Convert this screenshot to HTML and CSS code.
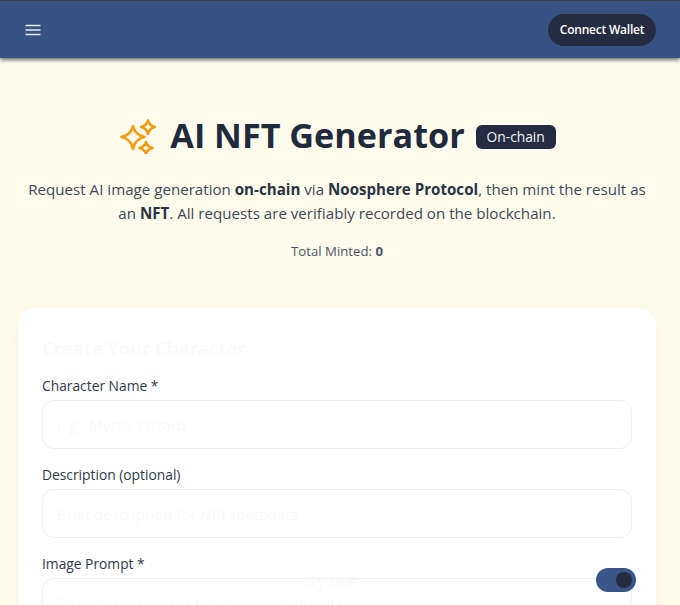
FILE: index.html
```html
<!DOCTYPE html>
<html lang="en">
<head>
<meta charset="utf-8">
<title>AI NFT Generator</title>
<link rel="stylesheet" href="styles.css">
</head>
<body>
<header class="topbar">
  <button class="menu" aria-label="Menu">
    <svg width="16" height="12" viewBox="0 0 16 12" fill="none" stroke="#e6ecf7" stroke-width="1.4"><path d="M0.5 1.5H15.5M0.5 6H15.5M0.5 10.5H15.5"/></svg>
  </button>
  <button class="connect">Connect Wallet</button>
</header>
<main class="page">
  <section class="hero">
    <h1 class="title">
      <svg class="sparkles" width="38" height="38" viewBox="0 0 38 38" fill="none" stroke="#f39c12" stroke-width="2.6" stroke-linejoin="round"><path d="M13 10Q15 19 24.500 21Q15 23 13 33Q11 23 1.500 21Q11 19 13 10Z"/><path d="M28 4.500Q29.300 9.700 35 11Q29.300 12.300 28 18Q26.700 12.300 21 11Q26.700 9.700 28 4.500Z"/><path d="M26 26Q27.200 30.800 32.500 32Q27.200 33.200 26 38Q24.800 33.200 19.500 32Q24.800 30.800 26 26Z"/></svg>
      <span class="title-text">AI NFT Generator</span>
      <span class="badge">On-chain</span>
    </h1>
    <p class="lead">Request AI image generation <b>on-chain</b> via <b>Noosphere Protocol</b>, then mint the result as an <b>NFT</b>. All requests are verifiably recorded on the blockchain.</p>
    <p class="total">Total Minted: <b>0</b></p>
  </section>
  <section class="card">
    <h2 class="card-title">Create Your Character</h2>
    <div class="field">
      <label class="label">Character Name *</label>
      <div class="input">e.g., Mystic Wizard</div>
    </div>
    <div class="field">
      <label class="label">Description (optional)</label>
      <div class="input">Brief description for NFT metadata</div>
    </div>
    <div class="field">
      <label class="label">Image Prompt *</label>
      <div class="input">Describe the image you want to generate</div>
    </div>
  </section>
</main>
<div class="ghost">Sky Blue</div>
<div class="toggle"><span class="knob"></span></div>
</body>
</html>
```
FILE: styles.css
```css
* { box-sizing: border-box; }
html, body { height: 100%; }
body {
  margin: 0;
  height: 605px;
  overflow: hidden;
  background: #fffcee;
  font-family: "Open Sans", "Noto Sans", sans-serif;
  color: #1f2937;
}
.topbar {
  height: 58px;
  display: flex;
  align-items: center;
  justify-content: space-between;
  padding: 0 24px 0 25px;
  background: #385283;
  border-top: 1px solid #3a3f4c;
  box-shadow: 0 2px 4px rgba(30, 35, 50, 0.65);
}
.menu {
  display: flex;
  padding: 0;
  border: 0;
  background: none;
}
.connect {
  width: 108px;
  height: 32px;
  padding: 0;
  border: 0;
  border-radius: 16px;
  background: #252b41;
  color: #fff;
  font: 600 12px "Open Sans", sans-serif;
  letter-spacing: -0.22px;
}
.page { padding: 0 24px 0 18px; }
.hero {
  padding-top: 54px;
  text-align: center;
}
.title {
  margin: 0;
  height: 46px;
  padding-left: 2px;
  display: flex;
  align-items: center;
  justify-content: center;
  gap: 11px;
  font-size: 34.200px;
  font-weight: 700;
  color: #1f2a3c;
}
.title-text { margin-top: -2px; }
.sparkles { margin-right: 1px; }
.badge {
  width: 80px;
  margin-top: 4px;
  border-radius: 6px;
  background: #252b41;
  color: #f1f3f8;
  font-size: 13.800px;
  font-weight: 400;
  line-height: 24px;
}
.lead {
  margin: 19px 0 0;
  font-size: 15.130px;
  line-height: 24px;
  color: #3d4756;
}
.lead b { color: #2a3342; }
.total {
  margin: 16px 0 0;
  font-size: 13.200px;
  line-height: 20px;
  color: #4b5563;
}
.card {
  margin-top: 47px;
  padding: 25px 24px 24px;
  height: 400px;
  border-radius: 18px;
  background: #fff;
  box-shadow: 0 4px 20px rgba(120, 110, 80, 0.05);
}
.card-title {
  margin: 0 0 13px;
  font-size: 18.300px;
  line-height: 30px;
  font-weight: 700;
  color: #fafafc;
}
.field { margin-bottom: 16px; }
.label {
  display: block;
  margin-bottom: 4px;
  font-size: 13.800px;
  line-height: 20px;
  font-weight: 500;
  color: #2f3a4b;
}
.input {
  height: 49px;
  padding: 0 14px;
  display: flex;
  align-items: center;
  border: 1px solid #eef0f3;
  border-radius: 12px;
  background: #fff;
  font-size: 15px;
  color: #f9f9fa;
}
.ghost {
  position: fixed;
  left: 303px;
  top: 572px;
  font-size: 14px;
  color: #f8f9fb;
}
.toggle {
  position: fixed;
  left: 596px;
  top: 568px;
  width: 40px;
  height: 24px;
  border-radius: 12px;
  background: #3a5689;
}
.knob {
  position: absolute;
  left: 20px;
  top: 4px;
  width: 16px;
  height: 16px;
  border-radius: 50%;
  background: #252b41;
}
```
